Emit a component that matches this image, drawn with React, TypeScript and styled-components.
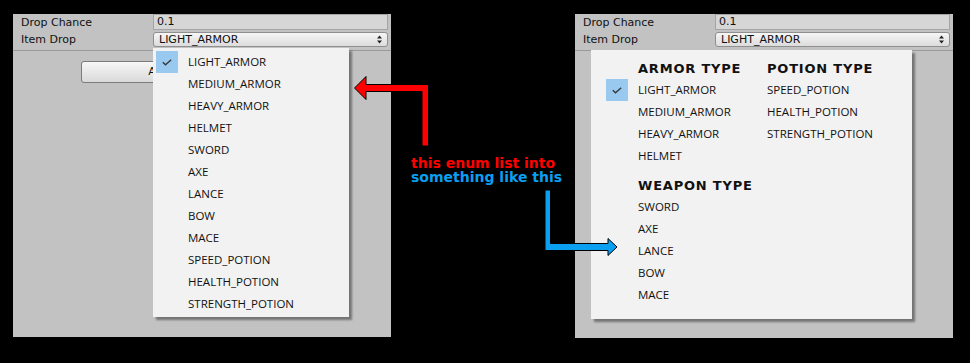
import React from 'react';
import styled, { createGlobalStyle } from 'styled-components';

const GlobalStyle = createGlobalStyle`
  html, body {
    margin: 0;
    padding: 0;
    background: #000;
  }
  body {
    width: 970px;
    height: 363px;
    overflow: hidden;
  }
`;

const Page = styled.div`
  position: relative;
  display: flex;
  align-items: flex-start;
  width: 970px;
  height: 363px;
  padding: 14px 0 0 13px;
  box-sizing: border-box;
  background: #000;
`;

const Panel = styled.div<{ $height: number }>`
  position: relative;
  flex-shrink: 0;
  width: 378px;
  height: ${p => p.$height}px;
  background: #c2c2c2;
`;

const Fields = styled.div`
  display: grid;
  grid-template-columns: 140px 235px;
  grid-template-rows: 16px 15px;
  row-gap: 2px;
  padding-bottom: 3px;
  border-bottom: 1px solid #9a9a9a;
`;

const Label = styled.div`
  align-self: center;
  padding-left: 8px;
  font: 11px 'DejaVu Sans', Verdana, sans-serif;
  color: #111;
`;

const TextField = styled.div`
  box-sizing: border-box;
  height: 16px;
  padding-left: 3px;
  border: 1px solid #a4a4a4;
  background: #d6d6d6;
  font: 11px/14px 'DejaVu Sans', Verdana, sans-serif;
  color: #111;
`;

const PopupField = styled.div`
  box-sizing: border-box;
  display: flex;
  align-items: center;
  justify-content: space-between;
  height: 15px;
  padding: 0 5px 0 5px;
  border: 1px solid #8f8f8f;
  border-radius: 3px;
  background: linear-gradient(#f6f6f6, #dcdcdc);
  font: 11px/13px 'DejaVu Sans', Verdana, sans-serif;
  color: #111;
`;

const ButtonRow = styled.div`
  padding: 10px 0 0 68px;
`;

const InspectorButton = styled.div`
  box-sizing: border-box;
  width: 242px;
  height: 22px;
  border: 1px solid #7c7c7c;
  border-radius: 3px;
  background: linear-gradient(#f7f7f7, #d9d9d9);
  font: 11px/20px 'DejaVu Sans', Verdana, sans-serif;
  text-align: center;
  white-space: nowrap;
  color: #111;
`;

const Menu = styled.div<{ $left: number; $top: number; $width: number }>`
  position: absolute;
  left: ${p => p.$left}px;
  top: ${p => p.$top}px;
  width: ${p => p.$width}px;
  height: 269px;
  box-sizing: border-box;
  background: #f2f2f2;
  box-shadow: 3px 3px 2px rgba(0, 0, 0, 0.4);
`;

const ListMenu = styled(Menu)`
  padding: 3px 0 0 3px;
`;

const GroupMenu = styled(Menu)`
  padding: 9px 0 0 15px;
`;

const ItemRow = styled.div`
  display: flex;
  align-items: center;
  gap: 10px;
  height: 22px;
  font: 11.5px/14px 'Open Sans', 'Noto Sans', sans-serif;
  color: #111;

  & > span {
    margin-top: -1px;
  }
`;

const CheckCell = styled.div<{ $checked?: boolean }>`
  display: flex;
  align-items: center;
  justify-content: center;
  width: 22px;
  height: 22px;
  background: ${p => (p.$checked ? '#99c9ef' : 'transparent')};
`;

const TopGroups = styled.div`
  display: flex;
`;

const Section = styled.div<{ $width?: number; $gap?: number }>`
  width: ${p => (p.$width ? `${p.$width}px` : 'auto')};
  margin-top: ${p => p.$gap || 0}px;
`;

const SectionTitle = styled.div<{ $indent: number }>`
  height: 20px;
  padding-left: ${p => p.$indent}px;
  font: bold 13px/20px 'DejaVu Sans', Verdana, sans-serif;
  letter-spacing: 0.8px;
  color: #111;
`;

const Middle = styled.div`
  flex-shrink: 0;
  width: 184px;
  padding: 142px 0 0 20px;
  box-sizing: border-box;
  font: bold 14px/14px 'DejaVu Sans', Verdana, sans-serif;
`;

const Caption = styled.div<{ $color: string }>`
  color: ${p => p.$color};
  white-space: nowrap;
`;

const Overlay = styled.svg`
  position: absolute;
  left: 0;
  top: 0;
  pointer-events: none;
`;

const Check = () => (
  <svg width="10" height="7" viewBox="0 0 10 7">
    <polyline points="0.8,3.2 3.5,5.8 9.2,0.8" fill="none" stroke="#3a3a3a" strokeWidth="1.4" />
  </svg>
);

const UpDown = () => (
  <svg width="5" height="9" viewBox="0 0 5 9">
    <path d="M0 3.5 L2.5 0.5 L5 3.5 Z M0 5.5 L5 5.5 L2.5 8.5 Z" fill="#222" />
  </svg>
);

const allItems = [
  'LIGHT_ARMOR', 'MEDIUM_ARMOR', 'HEAVY_ARMOR', 'HELMET', 'SWORD', 'AXE',
  'LANCE', 'BOW', 'MACE', 'SPEED_POTION', 'HEALTH_POTION', 'STRENGTH_POTION',
];
const armor = ['LIGHT_ARMOR', 'MEDIUM_ARMOR', 'HEAVY_ARMOR', 'HELMET'];
const potion = ['SPEED_POTION', 'HEALTH_POTION', 'STRENGTH_POTION'];
const weapon = ['SWORD', 'AXE', 'LANCE', 'BOW', 'MACE'];

const selected = 'LIGHT_ARMOR';

const InspectorFields: React.FC = () => (
  <Fields>
    <Label>Drop Chance</Label>
    <TextField>0.1</TextField>
    <Label>Item Drop</Label>
    <PopupField>
      <span>{selected}</span>
      <UpDown />
    </PopupField>
  </Fields>
);

const Group: React.FC<{ title: string; items: string[]; withCheck?: boolean; width?: number; gap?: number }> = ({
  title, items, withCheck, width, gap,
}) => (
  <Section $width={width} $gap={gap}>
    <SectionTitle $indent={withCheck ? 32 : 0}>{title}</SectionTitle>
    {items.map(item => (
      <ItemRow key={item}>
        {withCheck && <CheckCell $checked={item === selected}>{item === selected && <Check />}</CheckCell>}
        <span>{item}</span>
      </ItemRow>
    ))}
  </Section>
);

const App: React.FC = () => {
  return (
    <>
      <GlobalStyle />
      <Page>
        <Panel $height={323}>
          <InspectorFields />
          <ButtonRow>
            <InspectorButton>Add New Item Drop</InspectorButton>
          </ButtonRow>
          <ListMenu $left={140} $top={34} $width={196}>
            {allItems.map(item => (
              <ItemRow key={item}>
                <CheckCell $checked={item === selected}>{item === selected && <Check />}</CheckCell>
                <span>{item}</span>
              </ItemRow>
            ))}
          </ListMenu>
        </Panel>

        <Middle>
          <Caption $color="#ff0000">this enum list into</Caption>
          <Caption $color="#0a9ff0">something like this</Caption>
        </Middle>

        <Panel $height={324}>
          <InspectorFields />
          <GroupMenu $left={16} $top={36} $width={321}>
            <TopGroups>
              <Group title="ARMOR TYPE" items={armor} withCheck width={161} />
              <Group title="POTION TYPE" items={potion} />
            </TopGroups>
            <Group title="WEAPON TYPE" items={weapon} withCheck gap={9} />
          </GroupMenu>
        </Panel>

        <Overlay width="970" height="363" viewBox="0 0 970 363">
          <path
            d="M354.5 88 L366 76.5 L366 84.5 L428.5 84.5 L428.5 146 L422 146 L422 91.5 L366 91.5 L366 99.5 Z"
            fill="#ff0000"
            stroke="#000"
            strokeWidth="1"
          />
          <path
            d="M545 190 L550.5 190 L550.5 243.5 L608 243.5 L608 238.5 L617 247 L608 255.5 L608 250.5 L545 250.5 Z"
            fill="#0a9ff0"
            stroke="#000"
            strokeWidth="1"
          />
        </Overlay>
      </Page>
    </>
  );
};

export default App;
